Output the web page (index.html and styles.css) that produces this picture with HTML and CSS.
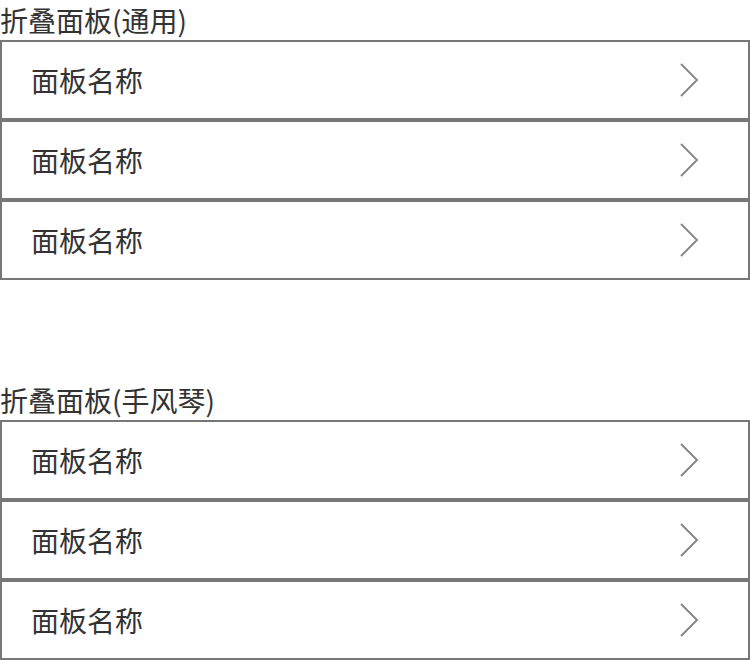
FILE: index.html
```html
<!DOCTYPE html>
<html lang="zh-CN">
<head>
    <meta charset="UTF-8">
    <meta name="viewport" content="width=device-width, initial-scale=1.0">
    <title>折叠面板</title>
    <link rel="stylesheet" href="styles.css">
</head>
<body>

<div class="section">
    <div class="section-title">折叠面板(通用)</div>
    <div class="panel-list">
        <div class="panel-item">
            <span class="panel-name">面板名称</span>
            <svg class="arrow" width="20" height="34" viewBox="0 0 20 34"><path d="M2 1 L18 17 L2 33" fill="none" stroke="#888" stroke-width="2"/></svg>
        </div>
        <div class="panel-item">
            <span class="panel-name">面板名称</span>
            <svg class="arrow" width="20" height="34" viewBox="0 0 20 34"><path d="M2 1 L18 17 L2 33" fill="none" stroke="#888" stroke-width="2"/></svg>
        </div>
        <div class="panel-item">
            <span class="panel-name">面板名称</span>
            <svg class="arrow" width="20" height="34" viewBox="0 0 20 34"><path d="M2 1 L18 17 L2 33" fill="none" stroke="#888" stroke-width="2"/></svg>
        </div>
    </div>
</div>

<div class="section section-gap">
    <div class="section-title">折叠面板(手风琴)</div>
    <div class="panel-list">
        <div class="panel-item">
            <span class="panel-name">面板名称</span>
            <svg class="arrow" width="20" height="34" viewBox="0 0 20 34"><path d="M2 1 L18 17 L2 33" fill="none" stroke="#888" stroke-width="2"/></svg>
        </div>
        <div class="panel-item">
            <span class="panel-name">面板名称</span>
            <svg class="arrow" width="20" height="34" viewBox="0 0 20 34"><path d="M2 1 L18 17 L2 33" fill="none" stroke="#888" stroke-width="2"/></svg>
        </div>
        <div class="panel-item">
            <span class="panel-name">面板名称</span>
            <svg class="arrow" width="20" height="34" viewBox="0 0 20 34"><path d="M2 1 L18 17 L2 33" fill="none" stroke="#888" stroke-width="2"/></svg>
        </div>
    </div>
</div>

</body>
</html>
```

FILE: styles.css
```css
    body {
        font-family: "Noto Sans CJK SC", "Noto Sans", sans-serif;
        margin: 0;
        background-color: #fff;
        color: #333;
    }

    .section-gap {
        margin-top: 100px;
    }

    .section-title {
        height: 40px;
        line-height: 40px;
        font-size: 28px;
        color: #333;
    }

    .panel-item {
        display: flex;
        align-items: center;
        justify-content: space-between;
        height: 80px;
        box-sizing: border-box;
        border: 2px solid #777;
        padding: 0 49px 0 29px;
    }

    .panel-name {
        font-size: 28px;
        color: #333;
    }

    .arrow {
        display: block;
    }
```
